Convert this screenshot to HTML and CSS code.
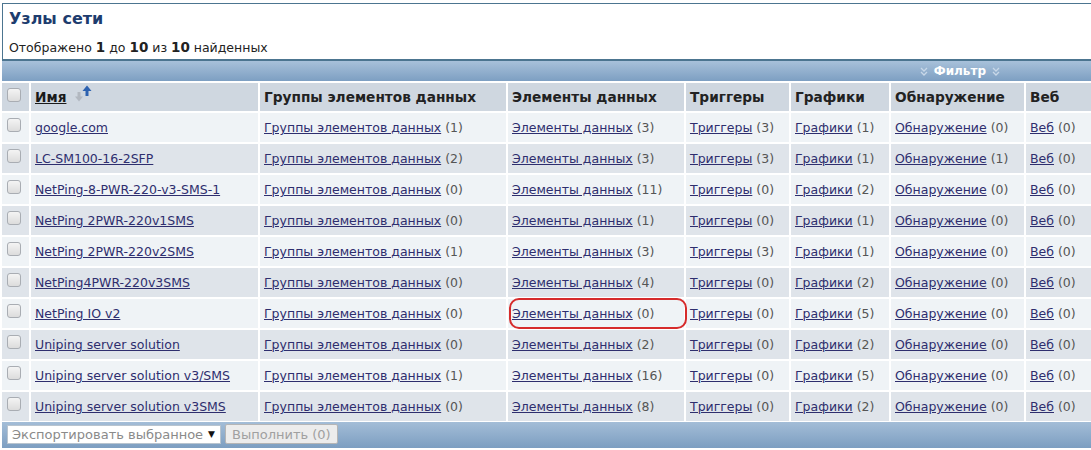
FILE: index.html
```html
<!DOCTYPE html>
<html lang="ru">
<head>
    <meta charset="UTF-8">
    <title>Узлы сети</title>
    <link rel="stylesheet" href="styles.css">
</head>
<body>
    <div class="page">
        <div class="header-box">
            <h1>Узлы сети</h1>
            <p class="found">Отображено <b>1</b> до <b>10</b> из <b>10</b> найденных</p>
        </div>

        <div class="filter-bar">
            <span class="filter">
                <svg class="chev" width="8" height="9" viewBox="0 0 8 9"><path d="M1 1l3 3 3-3M1 5l3 3 3-3" fill="none" stroke="#c8d8e8" stroke-width="1.3"/></svg>
                Фильтр
                <svg class="chev" width="8" height="9" viewBox="0 0 8 9"><path d="M1 1l3 3 3-3M1 5l3 3 3-3" fill="none" stroke="#c8d8e8" stroke-width="1.3"/></svg>
            </span>
        </div>

        <table class="hosts">
            <colgroup>
                <col class="c-cb">
                <col class="c-name">
                <col class="c-groups">
                <col class="c-items">
                <col class="c-trig">
                <col class="c-graph">
                <col class="c-disc">
                <col>
            </colgroup>
            <thead>
                <tr>
                    <th class="cb"><span class="check"></span></th>
                    <th>
                        <span class="sort-head">
                            <a class="sort" href="#">Имя</a>
                            <svg class="sort-icon" width="18" height="17" viewBox="0 0 18 17">
                                <path d="M5 7v6" stroke="#b2b8c0" stroke-width="3"/>
                                <path d="M1 11.5L5 16.5l4-5z" fill="#b2b8c0"/>
                                <path d="M13 11V4" stroke="#2d62b0" stroke-width="3"/>
                                <path d="M8.5 6L13 0.5l4.5 5.5z" fill="#2d62b0"/>
                            </svg>
                        </span>
                    </th>
                    <th>Группы элементов данных</th>
                    <th>Элементы данных</th>
                    <th>Триггеры</th>
                    <th>Графики</th>
                    <th>Обнаружение</th>
                    <th>Веб</th>
                </tr>
            </thead>
            <tbody id="rows"></tbody>
        </table>

        <div class="footer-bar">
            <div class="select">Экспортировать выбранное <span class="arrow">▼</span></div>
            <button class="go" disabled>Выполнить (0)</button>
        </div>
    </div>

    <span class="mark"></span>

    <script>
        var hosts = [
            ["google.com", 1, 3, 3, 1, 0, 0],
            ["LC-SM100-16-2SFP", 2, 3, 3, 1, 1, 0],
            ["NetPing-8-PWR-220-v3-SMS-1", 0, 11, 0, 2, 0, 0],
            ["NetPing 2PWR-220v1SMS", 0, 1, 0, 1, 0, 0],
            ["NetPing 2PWR-220v2SMS", 1, 3, 3, 1, 0, 0],
            ["NetPing4PWR-220v3SMS", 0, 4, 0, 2, 0, 0],
            ["NetPing IO v2", 0, 0, 0, 5, 0, 0],
            ["Uniping server solution", 0, 2, 0, 2, 0, 0],
            ["Uniping server solution v3/SMS", 1, 16, 0, 5, 0, 0],
            ["Uniping server solution v3SMS", 0, 8, 0, 2, 0, 0]
        ];
        var labels = ["Группы элементов данных", "Элементы данных", "Триггеры", "Графики", "Обнаружение", "Веб"];

        var html = "";
        hosts.forEach(function (h, i) {
            html += '<tr class="' + (i % 2 ? "even" : "odd") + '">';
            html += '<td class="cb"><span class="check"></span></td>';
            html += '<td><a href="#">' + h[0] + '</a></td>';
            for (var k = 0; k < labels.length; k++) {
                html += '<td><a href="#">' + labels[k] + '</a> <span class="num">(' + h[k + 1] + ')</span></td>';
            }
            html += '</tr>';
        });
        document.getElementById("rows").innerHTML = html;
    </script>
</body>
</html>
```

FILE: styles.css
```css
html, body {
    overflow: hidden;
}

body {
    margin: 0;
    padding: 3px 0 0 2px;
    font-family: "DejaVu Sans", Verdana, sans-serif;
    font-size: 12.5px;
    color: #333;
    background: #fff;
    position: relative;
}

.page {
    width: 1094px;
}

.header-box {
    border: 1px solid #4c7590;
    border-bottom-width: 2px;
    padding: 5px 6px 4px;
    height: 46px;
}

.header-box h1 {
    margin: 0;
    font-size: 16px;
    font-weight: bold;
    color: #1d3c6e;
    line-height: 20px;
}

.found {
    margin: 10px 0 0;
    font-size: 12.5px;
    color: #222;
}

.found b {
    font-size: 13.5px;
}

.filter-bar {
    height: 20px;
    background: linear-gradient(#a8c1da, #7d9fc2);
    display: flex;
    justify-content: flex-end;
    align-items: center;
    padding-right: 96px;
}

.filter {
    color: #fff;
    font-weight: bold;
    font-size: 12px;
    display: flex;
    align-items: center;
    gap: 6px;
}

.hosts {
    table-layout: fixed;
    width: calc(100% + 4px);
    margin-left: -2px;
    border-collapse: separate;
    border-spacing: 2px;
}

.c-cb { width: 27px; }
.c-name { width: 227px; }
.c-groups { width: 246px; }
.c-items { width: 176px; }
.c-trig { width: 103px; }
.c-graph { width: 98px; }
.c-disc { width: 133px; }

.hosts th {
    height: 28px;
    background: #cfd7e0;
    text-align: left;
    padding: 0 4px;
    font-size: 13.7px;
    color: #222;
    white-space: nowrap;
}

.hosts td {
    height: 29px;
    padding: 0 4px;
    white-space: nowrap;
}

.hosts tr.odd td {
    background: #eff3f6;
}

.hosts tr.even td {
    background: #dfe4ea;
}

.hosts th.cb,
.hosts td.cb {
    padding: 0 0 0 5px;
    vertical-align: top;
}

.check {
    display: block;
    width: 12px;
    height: 12px;
    margin-top: 5px;
    border: 1px solid #a9adb3;
    border-radius: 3px;
    background: linear-gradient(#f4f4f4, #dcdcdc);
}

.hosts a {
    color: #2e2e6e;
    text-decoration: underline;
}

.hosts a.sort {
    color: #1a1a1a;
}

.sort-head {
    display: inline-flex;
    align-items: flex-start;
    gap: 8px;
}

.sort-icon {
    display: block;
    margin-top: -4px;
}

.num {
    color: #555;
}

.footer-bar {
    height: 26px;
    margin-top: -1px;
    background: linear-gradient(#a3bdd7, #7c9ec1);
    display: flex;
    align-items: center;
    gap: 4px;
    padding-left: 5px;
}

.select {
    width: 208px;
    height: 17px;
    background: #fff;
    border: 1px solid #b8c4cf;
    color: #8a8a8a;
    font-size: 13px;
    line-height: 17px;
    padding-left: 4px;
    position: relative;
    margin-top: -2px;
}

.select .arrow {
    position: absolute;
    right: 5px;
    top: 0;
    font-size: 9px;
    color: #111;
}

.go {
    height: 20px;
    padding: 0 6px;
    font-family: inherit;
    font-size: 13px;
    color: #a0a0a0;
    background: #ececec;
    border: 1px solid #b5b5b5;
    border-radius: 2px;
    margin-top: -2px;
}

.mark {
    position: absolute;
    left: 509px;
    top: 298px;
    width: 174px;
    height: 27px;
    border: 2px solid #d62b2b;
    border-radius: 10px;
}
```
